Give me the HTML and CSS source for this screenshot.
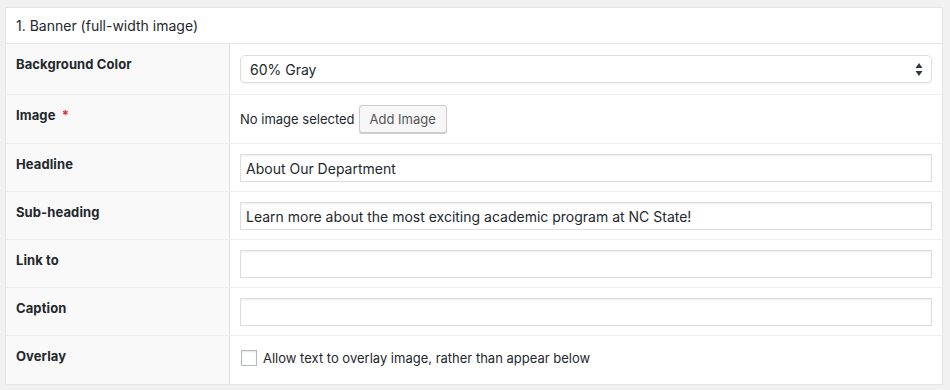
FILE: index.html
```html
<!DOCTYPE html>
<html lang="en">
<head>
    <meta charset="UTF-8">
    <meta name="viewport" content="width=device-width, initial-scale=1.0">
    <title>Banner Layout</title>
    <link rel="stylesheet" href="styles.css">
</head>
<body>
    <div class="layout-panel">
        <div class="layout-title">1. Banner (full-width image)</div>

        <div class="field-row row-select">
            <div class="field-label">Background Color</div>
            <div class="field-input">
                <div class="select-wrap">
                    <select class="select-box">
                        <option>60% Gray</option>
                        <option>White</option>
                        <option>Black</option>
                    </select>
                    <svg class="select-arrows" width="8" height="13" viewBox="0 0 8 13">
                        <path d="M4 0 L7.5 5 L0.5 5 Z" fill="#32373c"/>
                        <path d="M0.5 8 L7.5 8 L4 13 Z" fill="#32373c"/>
                    </svg>
                </div>
            </div>
        </div>

        <div class="field-row row-image">
            <div class="field-label">Image <span class="required">*</span></div>
            <div class="field-input image-field">
                <span class="no-image">No image selected</span>
                <button type="button" class="btn">Add Image</button>
            </div>
        </div>

        <div class="field-row">
            <div class="field-label">Headline</div>
            <div class="field-input">
                <input type="text" class="text-input" value="About Our Department">
            </div>
        </div>

        <div class="field-row">
            <div class="field-label">Sub-heading</div>
            <div class="field-input">
                <input type="text" class="text-input" value="Learn more about the most exciting academic program at NC State!">
            </div>
        </div>

        <div class="field-row">
            <div class="field-label">Link to</div>
            <div class="field-input">
                <input type="text" class="text-input" value="">
            </div>
        </div>

        <div class="field-row">
            <div class="field-label">Caption</div>
            <div class="field-input">
                <input type="text" class="text-input" value="">
            </div>
        </div>

        <div class="field-row row-check">
            <div class="field-label">Overlay</div>
            <div class="field-input">
                <label class="check-label">
                    <input type="checkbox" class="check-box">
                    Allow text to overlay image, rather than appear below
                </label>
            </div>
        </div>
    </div>
</body>
</html>
```

FILE: styles.css
```css
* {
    margin: 0;
    padding: 0;
    box-sizing: border-box;
}

body {
    font-family: Inter, "Liberation Sans", Arial, sans-serif;
    background-color: #f1f1f1;
    color: #23282d;
    padding: 7px 7px 0 5px;
}

.layout-panel {
    background-color: #fff;
    border: 1px solid #e5e5e5;
    width: 938px;
}

.layout-title {
    font-size: 14px;
    line-height: 19px;
    padding: 8px 10px;
    border-bottom: 1px solid #e5e5e5;
}

.field-row {
    display: grid;
    grid-template-columns: 224px 1fr;
    border-top: 1px solid #eeeeee;
}

.layout-title + .field-row {
    border-top: none;
}

.field-label {
    background-color: #f9f9f9;
    border-right: 1px solid #e1e1e1;
    padding: 10px 10px;
    font-size: 13px;
    line-height: 20px;
    font-weight: bold;
    letter-spacing: 0.1px;
}

.required {
    color: #dc3232;
    margin-left: 3px;
}

.field-input {
    padding: 10px 10px 9px 10px;
}

.row-select .field-input,
.row-image .field-input {
    padding-bottom: 10px;
}

.select-wrap {
    position: relative;
    margin: 1px 0;
}

.select-box {
    -webkit-appearance: none;
    appearance: none;
    display: block;
    width: 100%;
    height: 28px;
    padding: 0 24px 0 9px;
    font-family: inherit;
    font-size: 14px;
    color: #23282d;
    background-color: #fff;
    border: 1px solid #dddddd;
    border-radius: 5px;
    box-shadow: 0 1px 1px rgba(0, 0, 0, 0.04);
}

.select-arrows {
    position: absolute;
    right: 9px;
    top: 8px;
}

.image-field {
    display: flex;
    align-items: center;
    gap: 4px;
}

.no-image {
    font-size: 13px;
}

.btn {
    height: 28px;
    padding: 0 10px;
    font-family: inherit;
    font-size: 13px;
    color: #555;
    background-color: #f7f7f7;
    border: 1px solid #cccccc;
    border-radius: 3px;
    box-shadow: 0 1px 0 #cccccc;
    cursor: pointer;
}

.text-input {
    display: block;
    width: 100%;
    height: 28px;
    padding: 0 5px;
    font-family: inherit;
    font-size: 14px;
    color: #23282d;
    background-color: #fff;
    border: 1px solid #dddddd;
    box-shadow: inset 0 1px 2px rgba(0, 0, 0, 0.07);
}

.row-check .field-input {
    padding: 10px 10px 14px 10px;
}

.check-label {
    display: flex;
    align-items: center;
    height: 24px;
    font-size: 13px;
}

.check-box {
    -webkit-appearance: none;
    appearance: none;
    width: 16px;
    height: 16px;
    margin: 0 6px 0 1px;
    border: 1px solid #b4b9be;
    background-color: #fff;
    box-shadow: inset 0 1px 2px rgba(0, 0, 0, 0.1);
}
```
